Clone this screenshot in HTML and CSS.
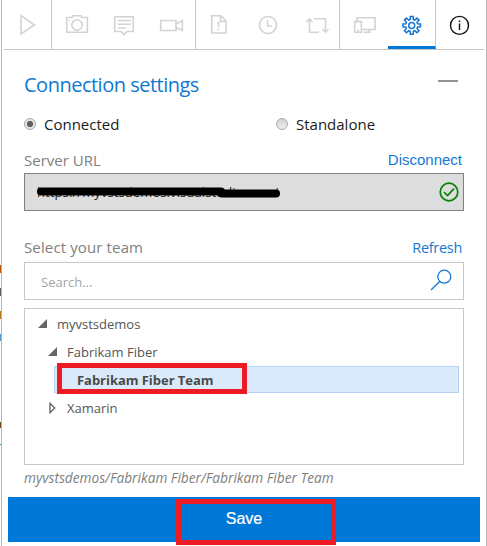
FILE: index.html
```html
<!DOCTYPE html>
<html lang="en">
<head>
<meta charset="utf-8">
<title>Connection settings</title>
<link rel="stylesheet" href="styles.css">
</head>
<body>
<div class="behind"><i class="frag f1"></i><i class="frag f2"></i><i class="frag f3"></i><i class="frag f4"></i><i class="frag f5"></i><i class="frag f6"></i></div>
<div class="panel">
  <nav class="toolbar">
    <div class="tool sep"><svg viewBox="0 0 48 48"><path d="M17 15.500V34L30.500 25Z"/></svg></div>
    <div class="tool"><svg viewBox="0 0 48 48"><path d="M14.700 17.500H20L21 15.700H29L30 17.500H35.300V32.300H14.700Z"/><circle cx="25" cy="25" r="5.200"/><path class="thin" d="M16.500 20.500H18"/></svg></div>
    <div class="tool"><svg viewBox="0 0 48 48"><path d="M14.700 16.700H33.300V31.500H27L24 34.500L21 31.500H14.700Z"/><path d="M18 20.500H31M18 24.300H31M18 28H26"/></svg></div>
    <div class="tool sep"><svg viewBox="0 0 48 48"><path d="M12.700 20.500H28V30.500H12.700ZM28 24L34.300 20.500V30.500L28 27.500"/></svg></div>
    <div class="tool"><svg viewBox="0 0 48 48"><path d="M15.700 15.700H25L30 21V33H15.700ZM24.500 16V21.500H30"/><path d="M22.500 21.500V27M22.500 28.500V30.300"/></svg></div>
    <div class="tool"><svg viewBox="0 0 48 48"><circle cx="24" cy="25" r="8.500"/><path d="M23.500 20V26H28"/></svg></div>
    <div class="tool sep"><svg viewBox="0 0 48 48"><path d="M17.500 19V32.300H27M14.500 22L17.500 19L20.500 22M22 18.700H33.500V32M30.500 29L33.500 32L36.500 29"/></svg></div>
    <div class="tool"><svg viewBox="0 0 48 48"><path d="M17 21V17.700H35V29.500H22M14.600 21.600H21.400V32.300H14.600ZM29 29.500V32.300M23.500 32.300H31M17 30.500H19"/></svg></div>
    <div class="tool sep active"><svg viewBox="0 0 48 48"><path class="gear" d="M22.200 19.500L22.300 16.500H25.100L25.300 19.500L26.700 20.100L29 18.100L31 20.100L29 22.400L29.600 23.800L32.500 24V26.800L29.600 27L29 28.400L31 30.700L29 32.700L26.700 30.700L25.300 31.300L25.100 34.300H22.300L22.200 31.300L20.700 30.700L18.400 32.700L16.400 30.700L18.400 28.400L17.800 27L14.900 26.800V24L17.800 23.800L18.400 22.400L16.400 20.100L18.400 18.100L20.700 20.100Z"/><circle class="gear" cx="23.700" cy="25.400" r="3"/></svg></div>
    <div class="tool info"><svg viewBox="0 0 48 48"><circle cx="23.500" cy="25.400" r="9"/><path d="M23.500 23.500V30M23.500 20.500V22"/></svg></div>
  </nav>
  <main class="content">
    <header class="heading"><h1>Connection settings</h1><span class="collapse"></span></header>
    <div class="modes">
      <label class="mode"><span class="radio checked"></span><span class="mode-name">Connected</span></label>
      <label class="mode"><span class="radio"></span><span class="mode-name">Standalone</span></label>
    </div>
    <div class="labels server"><span class="caption url-caption">Server URL</span><a class="disconnect">Disconnect</a></div>
    <div class="url"><span class="address">https://myvstsdemos.visualstudio.com/</span>
      <svg class="redaction" viewBox="0 0 260 38"><path class="thick" d="M17 18.500H197"/><path class="narrow" d="M198 20.500H252"/></svg>
      <svg class="ok" viewBox="0 0 20 20"><circle cx="10" cy="10" r="8.800"/><path d="M5 10.200L8.500 13.500L15 6.700"/></svg>
    </div>
    <div class="labels team"><span class="caption team-caption">Select your team</span><a class="refresh">Refresh</a></div>
    <div class="search"><span>Search...</span><svg viewBox="0 0 22 22"><circle cx="14.300" cy="7.700" r="6.500"/><path d="M9.700 12.500L1 21"/></svg></div>
    <div class="tree">
      <div class="node root"><svg viewBox="0 0 10 10"><path class="open" d="M9 0V9H0Z"/></svg><span>myvstsdemos</span></div>
      <div class="node child"><svg viewBox="0 0 10 10"><path class="open" d="M9 0V9H0Z"/></svg><span>Fabrikam Fiber</span></div>
      <div class="node selected"><span>Fabrikam Fiber Team</span><div class="mark team-mark"></div></div>
      <div class="node child last"><svg viewBox="0 0 10 12"><path class="closed" d="M2 1.300V10.700L6.700 6Z"/></svg><span>Xamarin</span></div>
    </div>
    <div class="path"><span>myvstsdemos/Fabrikam Fiber/Fabrikam Fiber Team</span></div>
  </main>
  <div class="save"><span>Save</span><div class="mark save-mark"></div></div>
</div>
</body>
</html>
```
FILE: styles.css
```css
* { box-sizing: border-box; }
body { margin: 0; width: 487px; height: 546px; overflow: hidden; position: relative; background: #fff; font-family: "Open Sans", "Noto Sans", sans-serif; }
svg { display: block; flex: none; fill: none; }
.panel { width: 486px; height: 546px; margin-left: 1px; border-left: 1px solid #b5b5b5; border-right: 1px solid #b5b5b5; }
.behind { position: absolute; left: 0; top: 0; width: 1px; height: 546px; }
.frag { position: absolute; left: 0; width: 1px; height: 8px; background: #b85508; }
.f1 { top: 265px; }
.f2 { top: 288px; background: #665f55; }
.f3 { top: 311px; background: #bd761c; }
.f4 { top: 334px; height: 7px; background: #559dd0; }
.f5 { top: 422px; height: 6px; background: #6b4819; }
.f6 { top: 444px; height: 1px; background: #1683b9; }

.toolbar { display: flex; width: 480px; height: 50px; margin-left: 2px; border-bottom: 1px solid #c8c8c8; }
.tool { width: 48px; height: 49px; }
.tool svg { width: 48px; height: 48px; stroke: #d3d3d3; stroke-width: 1.600; }
.tool.sep { border-right: 1px solid #c8c8c8; }
.tool.sep svg { width: 48px; margin-right: -1px; }
.tool .thin { stroke-width: 1; }
.tool.active { border-bottom: 3px solid #0078d7; }
.tool.active svg { stroke: #1774d0; stroke-width: 1.500; }
.tool.info svg { stroke: #111; stroke-width: 1.400; }

.content { width: 440px; margin-left: 22px; }
.heading { display: flex; align-items: center; justify-content: space-between; height: 56px; padding: 14px 6px 0 0; }
h1 { margin: 0; font-size: 20px; line-height: 28px; font-weight: 400; letter-spacing: -.5px; color: #0f78d2; }
.collapse { width: 20px; height: 2px; margin-top: -8px; background: #929292; }
.modes { display: flex; height: 37px; align-items: center; }
.mode { display: flex; align-items: center; width: 252px; gap: 8px; font-size: 15px; letter-spacing: 0; color: #1b1b1b; }
.mode + .mode { width: auto; }
.mode-name { margin-top: -2px; }
.radio { width: 12px; height: 12px; flex: none; margin-top: -1px; border: 1px solid #aaa; border-radius: 50%; background: linear-gradient(#d2d2d2, #eee); }
.radio.checked { background: radial-gradient(circle, #606060 0 2.800px, #e4e4e4 3.400px); }
.labels { display: flex; justify-content: space-between; align-items: center; padding-right: 2px; }
.server { height: 30px; padding-top: 3px; }
.caption { font-size: 15px; color: #808080; letter-spacing: 0; }
.team-caption { letter-spacing: .13px; }
.labels a { color: #1478d4; font-size: 14.500px; letter-spacing: -.3px; }
.labels a.disconnect { font-family: "Liberation Sans", sans-serif; font-size: 15px; letter-spacing: 0; }
.url { display: flex; align-items: center; height: 38px; border: 1px solid #808080; background: #ddd; position: relative; padding: 0 4px 0 12px; justify-content: space-between; }
.address { font-size: 13px; color: #222; letter-spacing: .1px; white-space: nowrap; }
.redaction { position: absolute; left: -1px; top: -1px; width: 260px; height: 38px; stroke: #000; stroke-linecap: round; }
.thick, .narrow { stroke-width: 8; }
.ok { width: 20px; height: 20px; stroke: #078207; stroke-width: 1.700; }
.team { height: 51px; padding-top: 21px; }
.search { display: flex; align-items: center; justify-content: space-between; height: 38px; border: 1px solid #c8c8c8; padding: 2px 11px 0 16px; color: #a5a5a5; font-size: 13px; }
.search svg { width: 22px; height: 22px; stroke: #1478d4; stroke-width: 1.300; margin-top: -4px; }
.tree { height: 157px; margin-top: 8px; border: 1px solid #c8c8c8; padding-top: 1px; }
.node { display: flex; align-items: center; height: 28px; color: #555; font-size: 13px; }
.root { padding-left: 13px; gap: 9px; }
.child { padding-left: 23px; gap: 9px; }
.node svg { width: 10px; height: 10px; }
.child svg { height: 12px; }
.open { fill: #666; }
.closed { stroke: #666; stroke-width: 1.400; }
.selected { position: relative; height: 27px; width: 405px; margin-left: 29px; padding-left: 22px; border: 1px solid #b4d2f8; background: #dbeafa; color: #4a4a4a; font-weight: 700; letter-spacing: -.04px; }
.last { margin-top: 1px; }
.mark { position: absolute; border: 5px solid #ed1c24; }
.team-mark { left: 2px; top: -4px; width: 190px; height: 31px; }
.path { height: 32px; padding-top: 4px; font-size: 13.700px; line-height: 18px; font-style: italic; color: #808080; white-space: nowrap; }
.save { position: relative; display: flex; align-items: center; justify-content: center; width: 472px; height: 45px; margin-left: 6px; padding-bottom: 2px; background: #0078d7; color: #fff; font: 16px "Liberation Sans", sans-serif; -webkit-text-stroke: .2px #fff; }
.save-mark { left: 168px; top: 2px; width: 160px; height: 46px; }
```
